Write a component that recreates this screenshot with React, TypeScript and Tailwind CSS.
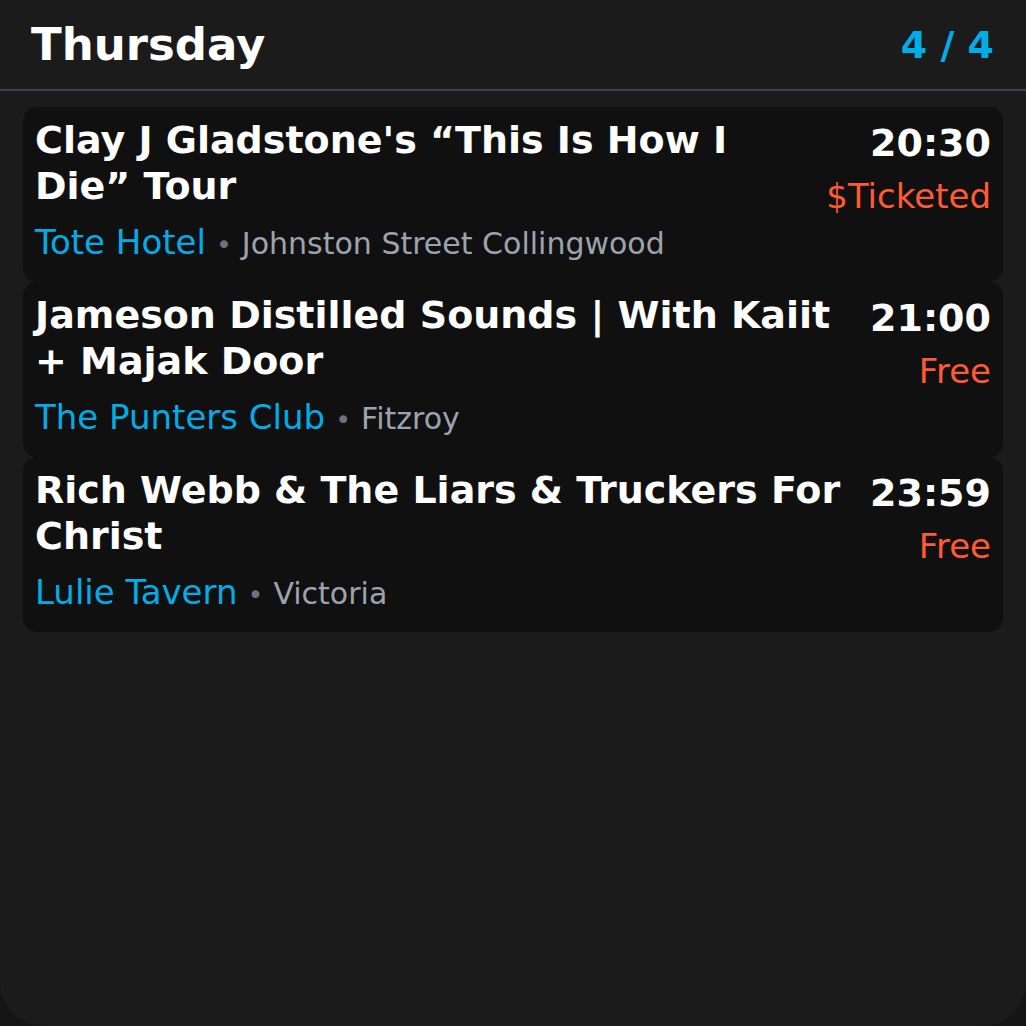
import React from "react";

type Gig = {
  title: string;
  time: string;
  price: string;
  venue: string;
  area: string;
};

const gigs: Gig[] = [
  {
    title: "Clay J Gladstone's \u201CThis Is How I Die\u201D Tour",
    time: "20:30",
    price: "$Ticketed",
    venue: "Tote Hotel",
    area: "Johnston Street Collingwood",
  },
  {
    title: "Jameson Distilled Sounds | With Kaiit + Majak Door",
    time: "21:00",
    price: "Free",
    venue: "The Punters Club",
    area: "Fitzroy",
  },
  {
    title: "Rich Webb & The Liars & Truckers For Christ",
    time: "23:59",
    price: "Free",
    venue: "Lulie Tavern",
    area: "Victoria",
  },
];

const GigCard: React.FC<{ gig: Gig }> = ({ gig }) => (
  <div className="bg-[#101010] rounded-[14px] px-3 pt-[10px] pb-[17px] flex justify-between gap-6">
    <div className="min-w-0">
      <div className="text-[38px] leading-[46px] font-bold text-white">
        {gig.title}
      </div>
      <div className="mt-[13px] text-[34px] leading-[40px] whitespace-nowrap">
        <span className="text-[#00ade6]">{gig.venue}</span>
        <span className="text-[#6b7280] text-[27px] mx-[10px]">•</span>
        <span className="text-[#9ca3af] text-[30px]">{gig.area}</span>
      </div>
    </div>
    <div className="flex flex-col items-end shrink-0">
      <div className="text-[38px] leading-[46px] font-bold text-white mt-[3px]">
        {gig.time}
      </div>
      <div className="mt-[10px] text-[34px] leading-[40px] text-[#ff5a36]">
        {gig.price}
      </div>
    </div>
  </div>
);

const App: React.FC = () => {
  return (
    <div
      className="w-[1026px] h-[1026px] bg-[#151515]"
      style={{ fontFamily: '"DejaVu Sans", sans-serif' }}
    >
      <div className="h-full bg-[#1b1b1b] rounded-b-[44px] flex flex-col">
        <div className="flex items-center justify-between pl-[31px] pr-[32px] h-[91px] border-b-2 border-[#374151]">
          <h1 className="text-[45px] leading-[56px] font-bold text-white">
            Thursday
          </h1>
          <span className="text-[38px] leading-[48px] font-bold text-[#00ade6]">
            4 / 4
          </span>
        </div>
        <div className="px-[23px] pt-4 flex flex-col">
          {gigs.map((g) => (
            <GigCard key={g.time} gig={g} />
          ))}
        </div>
      </div>
    </div>
  );
};

export default App;
